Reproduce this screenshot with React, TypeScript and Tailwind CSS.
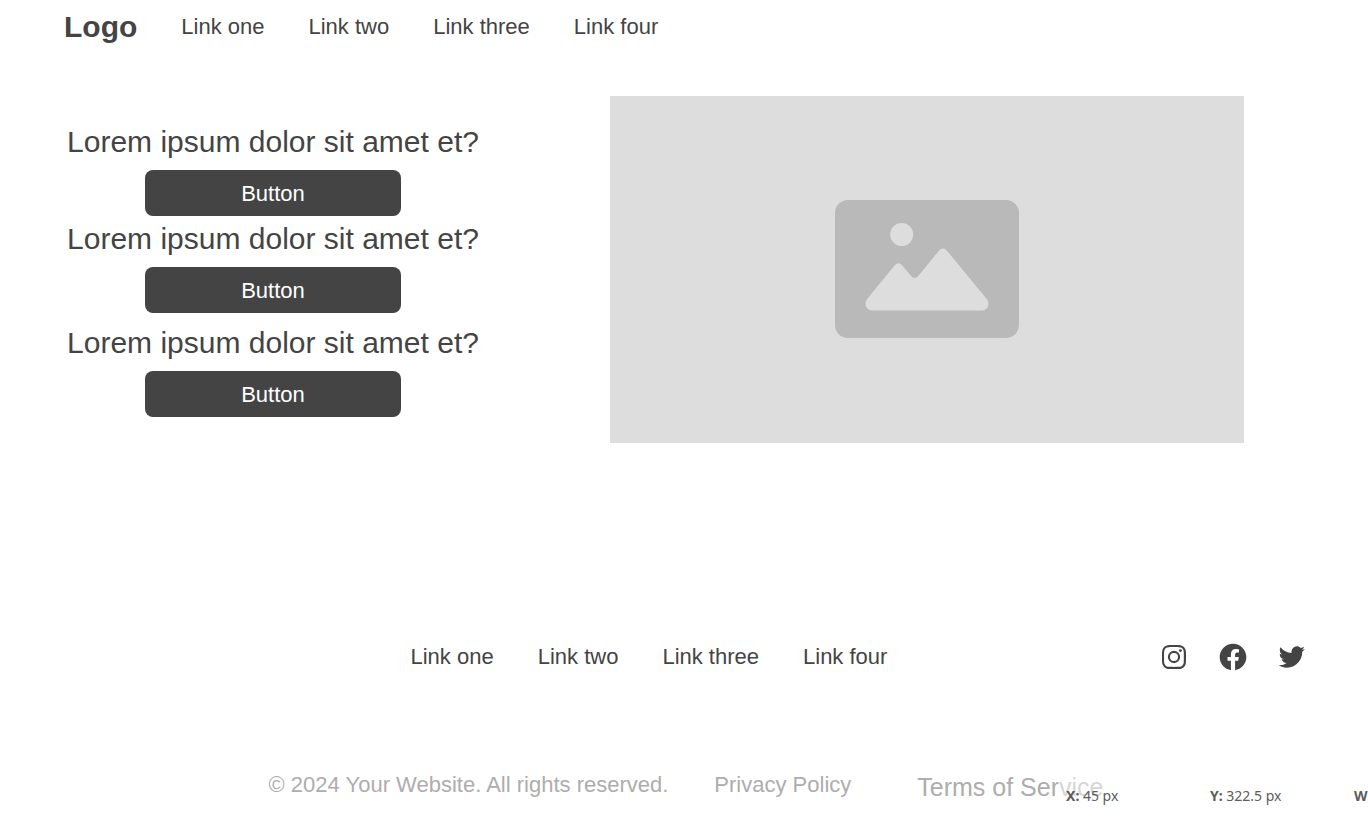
import { BiLogoFacebookCircle, BiLogoInstagram, BiLogoTwitter } from "react-icons/bi";

const links = ["Link one", "Link two", "Link three", "Link four"];

const socials = [
  { label: "Instagram", Icon: BiLogoInstagram },
  { label: "Facebook", Icon: BiLogoFacebookCircle },
  { label: "Twitter", Icon: BiLogoTwitter },
];

function LinkList({ label }: { label: string }) {
  return (
    <nav aria-label={label} className="flex gap-11 text-[22px] leading-8">
      {links.map((link) => (
        <a key={link} href="#" className="whitespace-nowrap">
          {link}
        </a>
      ))}
    </nav>
  );
}

function Question() {
  return (
    <div className="flex flex-col items-center gap-2.5">
      <h2 className="text-[30px] leading-9 whitespace-nowrap">Lorem ipsum dolor sit amet et?</h2>
      <button type="button" className="h-[46px] w-64 rounded-lg bg-[#444444] pt-0.5 text-[22px] leading-8 text-white">
        Button
      </button>
    </div>
  );
}

function ImagePlaceholder() {
  return (
    <div className="flex h-[347px] min-w-0 flex-1 items-center justify-center bg-[#dddddd] pb-0.5">
      <svg viewBox="0 0 184 138" className="h-[138px] w-[184px]" role="img" aria-label="Image placeholder">
        <rect width="184" height="138" rx="13" fill="#b9b9b9" />
        <circle cx="66.7" cy="34.5" r="11.5" fill="#dddddd" />
        <path
          d="M32.2 99 L59.5 65.6 Q63.3 61 67.3 65.6 L75.8 75.8 Q79.6 80.2 83.4 75.8 L103.8 50.9 Q107.9 46 112.1 50.9 L151.8 99 C155.4 103.6 152.8 110.4 147 110.4 H37.4 C31.4 110.4 28.4 103.8 32.2 99 Z"
          fill="#dddddd"
        />
      </svg>
    </div>
  );
}

function Coordinate({ name, value }: { name: string; value: string }) {
  return (
    <span className="w-36 shrink-0 whitespace-nowrap">
      <b>{name}:</b> {value}
    </span>
  );
}

export default function App() {
  return (
    <div className="relative flex min-h-screen flex-col overflow-hidden bg-white font-['Liberation_Sans',Arial,sans-serif] text-[#444444]">
      <header className="flex items-center gap-11 px-16 pt-[9px] pb-2">
        <a href="#" className="text-[30px] leading-9 font-bold">
          Logo
        </a>
        <LinkList label="Main" />
      </header>

      <main className="flex items-start gap-32 pt-[43px] pr-[124px] pl-16">
        <div className="flex w-[418px] shrink-0 flex-col pt-7">
          <Question />
          <div className="mt-[5px] mb-3">
            <Question />
          </div>
          <Question />
        </div>
        <ImagePlaceholder />
      </main>

      <footer className="mt-auto pb-[23px]">
        <div className="grid grid-cols-[346fr_auto_420fr] items-center pr-[60px] pl-16">
          <div className="col-start-2">
            <LinkList label="Footer" />
          </div>
          <div className="flex justify-end gap-[27px]">
            {socials.map(({ label, Icon }) => (
              <a key={label} href="#" aria-label={label}>
                <Icon className="size-8" />
              </a>
            ))}
          </div>
        </div>
        <div className="mt-[94px] flex items-center justify-center pl-1 text-[22px] leading-8 whitespace-nowrap text-[#adadad]">
          <p>© 2024 Your Website. All rights reserved.</p>
          <a href="#" className="ml-[46px]">
            Privacy Policy
          </a>
          <a href="#" className="ml-[66px] pt-1 text-[25px] leading-8">
            Terms of Service
          </a>
        </div>
      </footer>

      <div className="absolute right-0 bottom-0 flex h-[60px] w-[310px] items-center overflow-hidden bg-white/50 pl-2 font-['Noto_Sans',sans-serif] text-sm text-[#5c5c5c]">
        <Coordinate name="X" value="45 px" />
        <Coordinate name="Y" value="322.5 px" />
        <Coordinate name="W" value="" />
      </div>
    </div>
  );
}
